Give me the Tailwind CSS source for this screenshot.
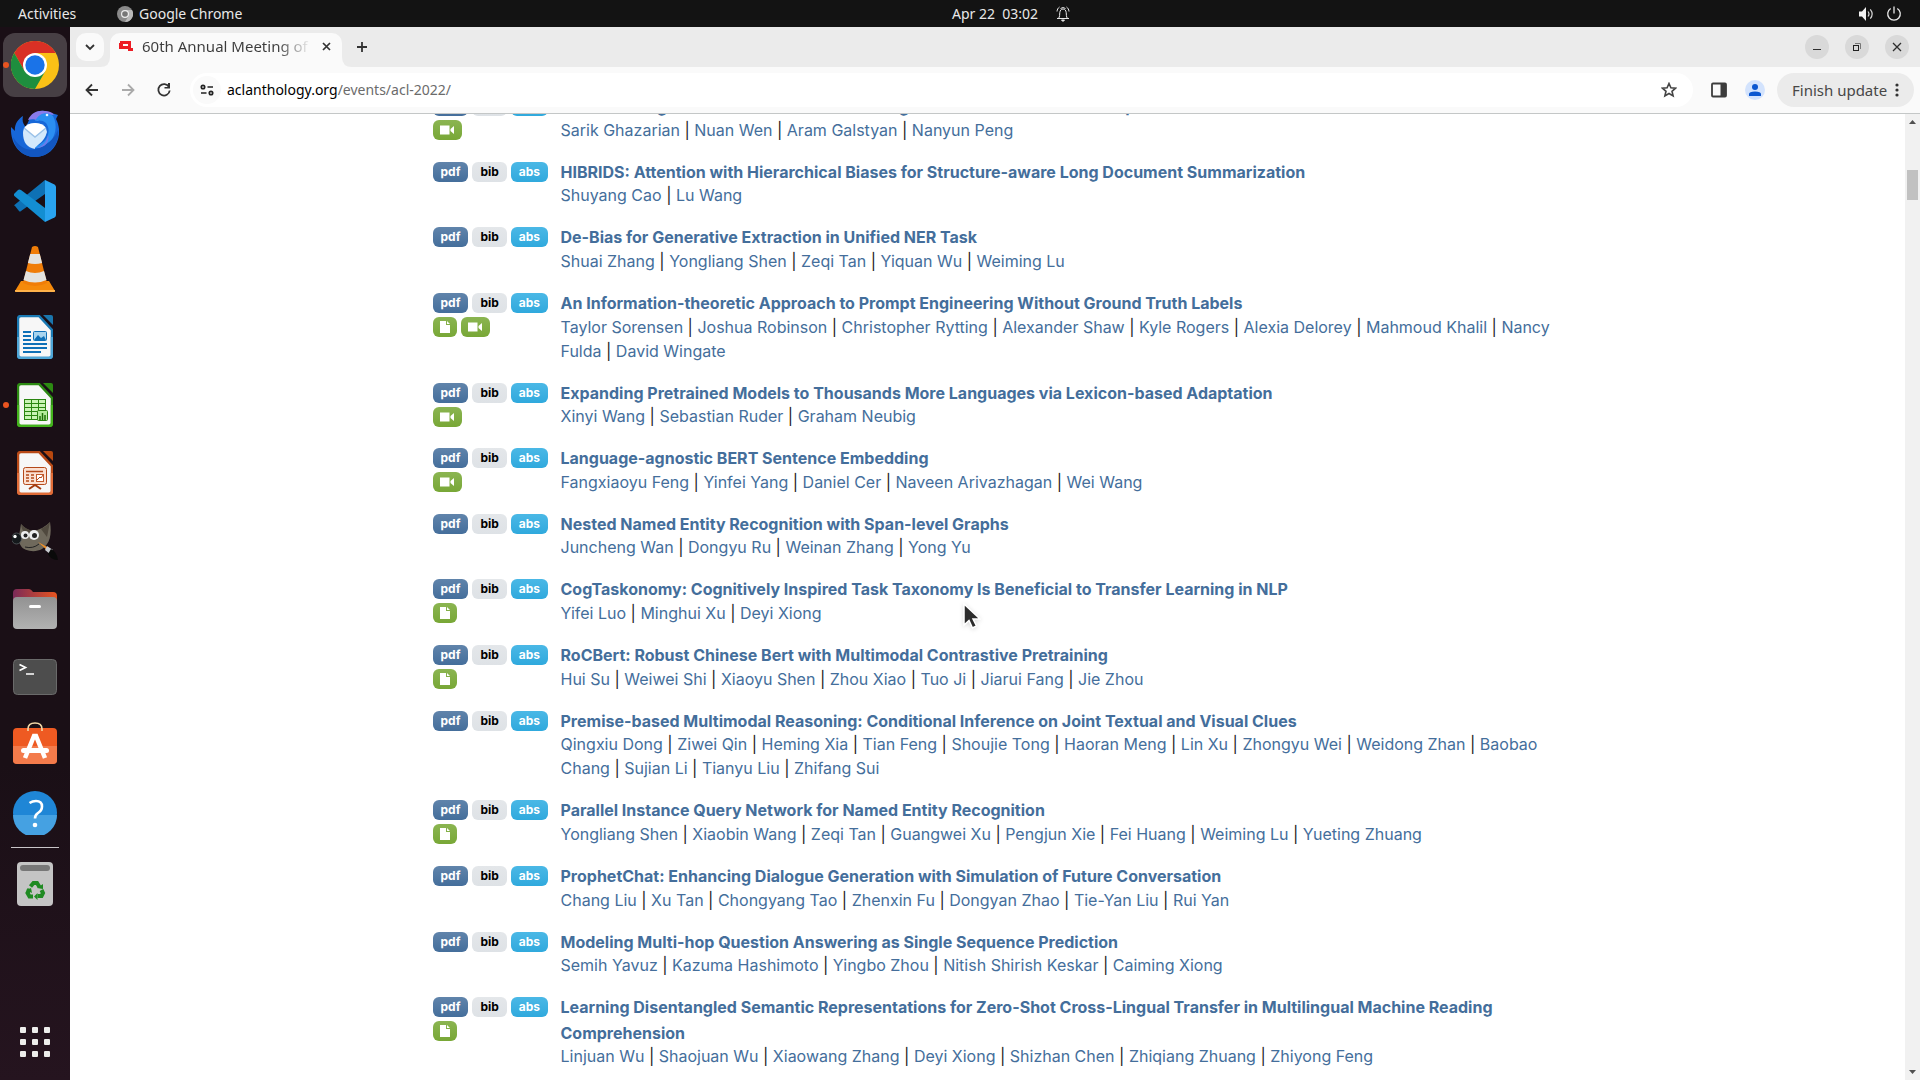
<!DOCTYPE html>
<html lang="en">
<head>
<meta charset="utf-8">
<title>60th Annual Meeting of the Association for Computational Linguistics</title>
<script src="https://cdn.jsdelivr.net/npm/@tailwindcss/browser@4"></script>
</head>
<body class="flex h-screen flex-col overflow-hidden bg-[#1b0f17] font-['Noto_Sans',sans-serif] text-[14px] leading-5">

<!-- desktop top bar -->
<header class="grid h-[27px] shrink-0 grid-cols-[1fr_auto_1fr] items-center bg-[#131313] text-[#e8e8e8]">
  <div class="flex items-center pl-[18px]">
    <button class="w-[63px] text-left">Activities</button>
    <button class="ml-9 flex items-center gap-[6px]">
      <svg class="size-4" viewBox="0 0 16 16"><circle cx="8" cy="8" r="8" fill="#8a8a8a"/><path d="M8 4h7a8 8 0 0 1-7 12l3.500-6z" fill="#b9b9b9"/><circle cx="8" cy="8" r="4" fill="#eee"/><circle cx="8" cy="8" r="2.800" fill="#777"/></svg>
      Google Chrome
    </button>
  </div>
  <div class="flex items-center gap-[18px] pl-[102px]">
    <span class="whitespace-pre">Apr 22  03:02</span>
    <svg class="h-4 w-[14px]" viewBox="0 0 14 16" fill="none" stroke="#e8e8e8"><path d="M1 12.500h12M2.500 12.500c1.500-2 1-4 1.300-6C4.100 4.500 5 3 7 3s2.900 1.500 3.200 3.500c.3 2-.2 4 1.300 6M1 5.500C1.200 3.500 2 2 3.500 1M13 5.500C12.800 3.500 12 2 10.500 1M4.500 2.500Q7 .5 9.500 2.500"/><path d="M5.500 14h3l-1.500 1.500z" fill="#e8e8e8"/></svg>
  </div>
  <div class="flex items-center justify-end gap-3 pr-[18px]">
    <svg class="h-4 w-4" viewBox="0 0 16 16"><path d="M1 5.500h3L8 1v14l-4-4.500H1z" fill="#f2f2f2"/><path d="M10 5.500q2 2.500 0 5M12.300 3.300q3.700 4.700 0 9.400" fill="none" stroke="#d8d8d8" stroke-width="1.200"/></svg>
    <svg class="h-4 w-4" viewBox="0 0 16 16" fill="none" stroke="#e8e8e8" stroke-width="1.300"><path d="M8 .5v7M4.700 2.500a6.300 6.300 0 1 0 6.600 0"/></svg>
  </div>
</header>

<div class="flex min-h-0 flex-1">
  <!-- dock -->
  <nav aria-label="Dock" class="flex w-[70px] shrink-0 flex-col items-center bg-linear-to-b from-[#1a0f16] from-70% to-[#25141f] pt-1">
    <button aria-label="Google Chrome" class="relative grid h-[68px] w-full place-items-center">
      <span class="grid size-16 place-items-center rounded-xl bg-white/20">
        <svg class="size-12" viewBox="0 0 48 48"><circle cx="24" cy="24" r="24" fill="#fbc116"/><path d="M3.200 12A24 24 0 0 1 44.800 12H24L13.600 30z" fill="#d93025"/><path d="M3.200 12A24 24 0 0 0 24 48L34.400 30 24 36 13.600 30z" fill="#1e8e3e"/><circle cx="24" cy="24" r="12" fill="#fff"/><circle cx="24" cy="24" r="9.700" fill="#1a73e8"/></svg>
      </span>
      <span class="absolute left-[3px] top-[31px] size-[6px] rounded-full bg-[#e95420]"></span>
    </button>
    <button aria-label="Thunderbird" class="grid h-[68px] w-full place-items-center">
      <svg class="size-12" viewBox="0 0 48 48"><path d="M0 18l4 4C3 16 7 10 12 7c-1 5 0 8 3 11l3-7C22 4 28 1 34 2l13 4-2 4c4 8 4 16 1 23-4 10-13 15-22 15C9 48-1 35 0 18z" fill="#1767d8"/><path d="M17 11C20 4 27 1 33 2c5 0 8 1 10 4-8-1-13 1-16 6-3-2-6-2-10-1z" fill="#8a7bea"/><path d="M24 12C28 4 36 2 42 7c5 9 3 22-6 29-4 3-9 4-14 2 12-2 20-14 13-24-3-3-7-3-11-2z" fill="#2b8ff2"/><path d="M2 28c7 12 18 16 28 10 8-4 14-9 17-17 2 13-8 27-23 27C12 48 4 40 2 28z" fill="#1256c0"/><path d="M12 24q0-9 12-10 12 1 12 9-2 8-9 13-4 3-3 4-12-2-12-16z" fill="#d4e9fb"/><path d="M13 20q2-6 11-6t11 6L24 28z" fill="#fff"/><path d="M13 19l11 9 11-9" fill="none" stroke="#9bc2e8" stroke-width="1.500"/><path d="M25 39c6-1 11-6 12-13 2 6-2 13-12 13z" fill="#6d7bea"/><circle cx="36" cy="6" r="1.300" fill="#e7f6ff"/></svg>
    </button>
    <button aria-label="Visual Studio Code" class="grid h-[68px] w-full place-items-center">
      <svg class="size-[42px]" viewBox="0 0 42 42"><path d="M1 26l4 5q1 1 2 0L31 14V0L1 24.500Q-.5 25.500 1 26z" fill="#0e71b5"/><path d="M0 14l4-4q1-1 3 0l24 18v14L1 16.500Q-.5 15 0 14z" fill="#138ed2"/><path d="M31 0l9.500 4.500Q42 5.500 42 7v28q0 1.500-1.500 2.500L31 42z" fill="#29a3ef"/></svg>
    </button>
    <button aria-label="VLC" class="grid h-[68px] w-full place-items-center">
      <svg class="h-[46px] w-10" viewBox="0 0 40 46"><path d="M6 35h28l6 10q0 1-1 1H1q-1 0-1-1z" fill="#f58a0b"/><path d="M0 44h40v1q0 1-1 1H1q-1 0-1-1z" fill="#ffb24a"/><path d="M17 1q3-2 6 0l9 36q-12 6-24 0z" fill="#f07d08"/><path d="M15.200 8h9.600l2.300 9q-7 2-14.200 0zM11 25q9 4 18 0l2.500 9q-11.500 5-23 0z" fill="#e3e3e0"/></svg>
    </button>
    <button aria-label="LibreOffice Writer" class="grid h-[68px] w-full place-items-center">
      <svg class="h-11 w-9" viewBox="0 0 36 44"><path d="M4 1h18l13 14v25q0 3-3 3H4q-3 0-3-3V4q0-3 3-3z" fill="#f7f7f7" stroke="#1a7ab4" stroke-width="2.500"/><path d="M1 22v18q0 3 3 3h28q3 0 3-3V22" fill="none" stroke="#4ea5d6" stroke-width="2.500"/><path d="M26 0h8q2 0 2 2v8z" fill="#1a76ad"/><path d="M6 17h8M6 21h8M6 25h8M6 29h24M6 33h24M6 37h18" stroke="#0f70b7" stroke-width="2"/><rect x="16.500" y="16.500" width="13" height="9" rx="1" fill="#a8d4ee" stroke="#0f70b7"/><path d="M17 25l4-5 3 3 3-2 2 4z" fill="#0f70b7"/></svg>
    </button>
    <button aria-label="LibreOffice Calc" class="relative grid h-[68px] w-full place-items-center">
      <span class="absolute left-[3px] top-[31px] size-[6px] rounded-full bg-[#e95420]"></span>
      <svg class="h-11 w-9" viewBox="0 0 36 44"><path d="M4 1h18l13 14v25q0 3-3 3H4q-3 0-3-3V4q0-3 3-3z" fill="#f7f7f7" stroke="#2c8a12" stroke-width="2.500"/><path d="M1 22v18q0 3 3 3h28q3 0 3-3V22" fill="none" stroke="#43b31c" stroke-width="2.500"/><path d="M26 0h8q2 0 2 2v8z" fill="#2c8a12"/><rect x="7.500" y="16.500" width="21" height="20" fill="#c8f3b4" stroke="#2a8510"/><path d="M8 20.500h20M8 24.500h20M8 28.500h20M8 32.500h20M14.500 17v19M21.500 17v19" stroke="#2a8510"/><rect x="20.500" y="27.500" width="10" height="10" rx="1" fill="#b4eb9b" stroke="#2a8510"/><path d="M23 37v-4M25.500 37v-7M28 37v-5" stroke="#1e7008" stroke-width="1.500"/></svg>
    </button>
    <button aria-label="LibreOffice Impress" class="grid h-[68px] w-full place-items-center">
      <svg class="h-11 w-9" viewBox="0 0 36 44"><path d="M4 1h18l13 14v25q0 3-3 3H4q-3 0-3-3V4q0-3 3-3z" fill="#f7f7f7" stroke="#b94a17" stroke-width="2.500"/><path d="M1 22v18q0 3 3 3h28q3 0 3-3V22" fill="none" stroke="#e06c38" stroke-width="2.500"/><path d="M26 0h8q2 0 2 2v8z" fill="#b8480f"/><rect x="6.500" y="16.500" width="23" height="17" rx="2" fill="#fbe0d2" stroke="#b4491a"/><path d="M9 20.500h17M14 24h3M14 27h3M14 30h3M9 24h3M9 27h3M9 30h3" stroke="#b4491a" stroke-width="1.500"/><rect x="19.500" y="23.500" width="7" height="7" fill="#fff" stroke="#c45a2a"/><path d="M20 29l3-3 1 1 2-3" fill="none" stroke="#b4491a"/><path d="M12 38l6-4 6 4" fill="none" stroke="#a43c10" stroke-width="2"/></svg>
    </button>
    <button aria-label="GIMP" class="grid h-[68px] w-full place-items-center">
      <svg class="h-10 w-[46px]" viewBox="0 0 46 40"><path d="M9 3q5 6 12 7c7-1 13-5 17-9 2 12 0 22-8 27-7 4-18 2-21-3-2-3-3-6-2-10z" fill="#6f695c"/><path d="M9 3q1 8 6 12l6-5q-8-2-12-7zM38 1q-4 5-9 7l6 8z" fill="#50493e"/><ellipse cx="4.500" cy="17.500" rx="5" ry="5.500" fill="#15191c" stroke="#5d6468" stroke-width=".7"/><circle cx="3" cy="15.500" r="1.700" fill="#fff"/><circle cx="13" cy="14" r="4" fill="#eee"/><circle cx="22" cy="14" r="5" fill="#eee"/><circle cx="13.500" cy="14.500" r="2" fill="#222"/><circle cx="22.500" cy="14.500" r="2.500" fill="#222"/><path d="M13 26q8 2 14-3" stroke="#222" fill="none"/><path d="M26 21l11 6-1 3z" fill="#f0912a"/><path d="M35 25l6 4-3 4-5-4z" fill="#c9ccd1"/><path d="M39 28q6 3 7 11-7 0-10-6z" fill="#0a0a0a"/></svg>
    </button>
    <button aria-label="Files" class="grid h-[68px] w-full place-items-center">
      <svg class="h-10 w-11" viewBox="0 0 44 40"><defs><linearGradient id="folder"><stop offset="0" stop-color="#7a2a58"/><stop offset="1" stop-color="#e85520"/></linearGradient><linearGradient id="front" x2="0" y2="1"><stop offset="0" stop-color="#929292"/><stop offset="1" stop-color="#b2b2b2"/></linearGradient></defs><path d="M0 4q0-4 4-4h12q2 0 4 3h20q4 0 4 4v14H0z" fill="url(#folder)"/><rect y="8" width="44" height="32" rx="4" fill="url(#front)"/><rect x="16" y="16" width="12" height="3" rx="1.500" fill="#fff"/></svg>
    </button>
    <button aria-label="Terminal" class="grid h-[68px] w-full place-items-center">
      <svg class="h-9 w-11" viewBox="0 0 44 36"><rect x=".5" y=".5" width="43" height="35" rx="4" fill="#4d4d4d" stroke="#6a6a6a"/><path d="M6.500 5.500l6 3-6 3M13 15h8" fill="none" stroke="#fff" stroke-width="1.700"/></svg>
    </button>
    <button aria-label="Ubuntu Software" class="grid h-[68px] w-full place-items-center pb-1">
      <svg class="h-[42px] w-11" viewBox="0 0 44 42"><rect y="6" width="44" height="36" rx="4" fill="#ee5a22"/><path d="M0 24h44v14q0 4-4 4H4q-4 0-4-4z" fill="#f37b4b"/><path d="M15 9V7q0-6 7-6t7 6v2" fill="none" stroke="#f4d9a8" stroke-width="1.600"/><path d="M12 36l9-22h2l9 22" fill="none" stroke="#fff" stroke-width="4.500"/><rect x="8" y="26" width="28" height="5" rx="2.500" fill="#fff"/></svg>
    </button>
    <button aria-label="Help" class="grid h-[68px] w-full place-items-center">
      <svg class="size-11" viewBox="0 0 44 44"><circle cx="22" cy="22" r="22" fill="#1f86d6"/><path d="M0 24h44a22 22 0 0 1-44 0z" fill="#45a1e2"/><path d="M16.500 12q3-2 6.500-2 6 0 6 5.500 0 4-4 6.500-3 2-3 5.500" fill="none" stroke="#fff" stroke-width="2.600"/><circle cx="22" cy="34" r="2.300" fill="#fff"/></svg>
    </button>
    <div class="h-px w-12 shrink-0 bg-[#c9c5c8]"></div>
    <button aria-label="Trash" class="grid h-[72px] w-full place-items-center">
      <svg class="h-11 w-9" viewBox="0 0 36 44"><rect width="36" height="44" rx="4" fill="#c4c4c4"/><rect x="3" y="3" width="30" height="6" rx="3" fill="#777"/><g fill="none" stroke="#1f8a22" stroke-width="4"><path d="M13.500 24.500l3-3.500h3.500l2.500 4M24.500 28l1.500 3-1.500 3h-4M16 34.500h-3.500L10.500 31l2-4"/></g><path d="M20 26l6 1 0-5zM20.500 31v7l-3.500-3.500zM9 28l5-2 1 5z" fill="#1f8a22"/></svg>
    </button>
    <button aria-label="Show Applications" class="mb-[23px] mt-auto grid grid-cols-3 gap-[6px]">
      <span class="size-[6px] rounded-[1px] bg-[#eeeeec]"></span><span class="size-[6px] rounded-[1px] bg-[#eeeeec]"></span><span class="size-[6px] rounded-[1px] bg-[#eeeeec]"></span>
      <span class="size-[6px] rounded-[1px] bg-[#eeeeec]"></span><span class="size-[6px] rounded-[1px] bg-[#eeeeec]"></span><span class="size-[6px] rounded-[1px] bg-[#eeeeec]"></span>
      <span class="size-[6px] rounded-[1px] bg-[#eeeeec]"></span><span class="size-[6px] rounded-[1px] bg-[#eeeeec]"></span><span class="size-[6px] rounded-[1px] bg-[#eeeeec]"></span>
    </button>
  </nav>

  <!-- browser window -->
  <div class="flex min-w-0 flex-1 flex-col bg-white">
    <div class="flex h-10 shrink-0 items-end bg-[#ebebeb] pr-[11px] text-[#3c3c3c]">
      <button aria-label="Search tabs" class="mb-[6px] ml-[6px] grid size-7 place-items-center rounded-[10px] bg-[#fafafa]">
        <svg class="size-3" viewBox="0 0 12 12" fill="none" stroke="#333" stroke-width="1.800"><path d="M2 4l4 4 4-4"/></svg>
      </button>
      <svg class="ml-[-4px] size-[10px]" viewBox="0 0 10 10"><path d="M10 0v10H0Q10 10 10 0z" fill="#fafafa"/></svg>
      <div class="flex h-[34px] w-[232px] items-center rounded-t-[10px] bg-[#fafafa] pb-2 pl-[9px] pr-2">
        <svg class="h-[10px] w-[14px]" viewBox="0 0 14 10"><path d="M1 0h11v7h2v3h-5V8H0V2h1zM4 3v2h5V3z" fill="#ed1c24" fill-rule="evenodd"/></svg>
        <span class="ml-[9px] w-[169px] overflow-hidden whitespace-nowrap bg-linear-to-r from-[#3c3c3c] from-80% to-transparent bg-clip-text text-[15px] text-transparent">60th Annual Meeting of the</span>
        <button aria-label="Close tab" class="ml-auto grid size-4 place-items-center"><svg class="size-[9px]" viewBox="0 0 9 9" stroke="#333" stroke-width="1.700"><path d="M1 1l7 7M8 1L1 8"/></svg></button>
      </div>
      <svg class="size-[10px]" viewBox="0 0 10 10"><path d="M0 0v10h10Q0 10 0 0z" fill="#fafafa"/></svg>
      <button aria-label="New tab" class="mb-[14px] ml-1"><svg class="size-3" viewBox="0 0 12 12" stroke="#333" stroke-width="1.800"><path d="M6 1v10M1 6h10"/></svg></button>
      <div class="mb-2 ml-auto flex gap-4">
        <button aria-label="Minimize" class="grid size-6 place-items-center rounded-full bg-[#d9d9d9]"><svg class="size-3" viewBox="0 0 12 12" stroke="#2e2e2e"><path d="M2 8.500h8"/></svg></button>
        <button aria-label="Restore" class="grid size-6 place-items-center rounded-full bg-[#d9d9d9]"><svg class="size-3" viewBox="0 0 12 12" fill="none"><path d="M4 2.500h5.500V8" stroke="#777"/><rect x="2.500" y="4.500" width="5" height="5" stroke="#222"/></svg></button>
        <button aria-label="Close" class="grid size-6 place-items-center rounded-full bg-[#d9d9d9]"><svg class="size-3" viewBox="0 0 12 12" stroke="#2e2e2e" stroke-width="1.300"><path d="M2 2l8 8M10 2l-8 8"/></svg></button>
      </div>
    </div>

    <div class="flex h-[47px] shrink-0 items-center border-b border-[#c4c7c7] bg-[#fafafa] pl-[14px] pr-[6px]">
      <button aria-label="Back" class="grid size-4 place-items-center"><svg class="size-4" viewBox="0 0 16 16" fill="none" stroke="#333" stroke-width="1.800"><path d="M14 8H3M8 2.500L2.500 8 8 13.500"/></svg></button>
      <button aria-label="Forward" disabled class="ml-5 grid size-4 place-items-center"><svg class="size-4" viewBox="0 0 16 16" fill="none" stroke="#aaa" stroke-width="1.800"><path d="M2 8h11M8 2.500L13.500 8 8 13.500"/></svg></button>
      <button aria-label="Reload" class="ml-5 grid size-4 place-items-center"><svg class="size-4" viewBox="0 0 16 16" fill="none" stroke="#333" stroke-width="1.800"><path d="M13 5A5.700 5.700 0 1 0 13.700 8.500"/><path d="M14 1v5.500H8.500V5H12V1z" fill="#333" stroke="none"/></svg></button>
      <div class="ml-[18px] flex h-[34px] min-w-0 flex-1 items-center rounded-full bg-white pl-[3px] pr-4">
        <button aria-label="View site information" class="grid size-7 place-items-center rounded-full bg-[#fafafa]"><svg class="h-3 w-[14px]" viewBox="0 0 14 12" fill="none" stroke="#222" stroke-width="1.700"><circle cx="3" cy="3" r="1.700"/><path d="M7.500 3H13M1 9h5.500"/><circle cx="11" cy="9" r="1.700"/></svg></button>
        <div class="ml-[6px] flex-1 text-[14px] text-[#6b6b6b]"><span class="text-black">aclanthology.org</span>/events/acl-2022/</div>
        <button aria-label="Bookmark this page"><svg class="size-4" viewBox="0 0 16 16" fill="none" stroke="#444" stroke-width="1.600"><path d="M8 1.500l1.900 4.300 4.700.4-3.600 3.100 1.100 4.600L8 11.500l-4.100 2.400L5 9.300 1.400 6.200l4.700-.4z"/></svg></button>
      </div>
      <button aria-label="Side panel" class="ml-[18px]"><svg class="size-4" viewBox="0 0 16 16"><rect x="1" y="1.500" width="14" height="13" rx="1" fill="none" stroke="#3c3c3c" stroke-width="1.800"/><path d="M9.500 1H15v14H9.500z" fill="#3c3c3c"/></svg></button>
      <button aria-label="Profile" class="ml-[18px] grid size-5 place-items-center rounded-full bg-[#d3e3fd]"><svg class="size-3" viewBox="0 0 12 12" fill="#0b57d0"><circle cx="6" cy="3" r="3"/><path d="M0 12v-2q0-2.500 6-2.500t6 2.500v2z"/></svg></button>
      <button class="ml-3 flex h-[34px] w-[137px] items-center justify-between rounded-full bg-[#ebebeb] px-[15px] text-[15px] text-[#474747]">Finish update
        <svg class="h-[14px] w-1" viewBox="0 0 4 14" fill="#333"><circle cx="2" cy="2" r="1.600"/><circle cx="2" cy="7" r="1.600"/><circle cx="2" cy="12" r="1.600"/></svg>
      </button>
    </div>

    <div class="flex min-h-0 flex-1">
      <main class="min-w-0 flex-1 overflow-hidden font-[Inter,sans-serif] text-[16px] leading-6 text-[#222]">
        <div id="papers" class="mx-auto -mt-[22px] max-w-[1140px] px-[15px]"></div>
      </main>
      <div class="flex w-[15px] shrink-0 flex-col items-center bg-[#f1f1f1] py-[6px]">
        <svg class="h-1 w-[7px]" viewBox="0 0 7 4"><path d="M0 4l3.500-4L7 4z" fill="#505050"/></svg>
        <div class="mt-[46px] h-[30px] w-[11px] bg-[#c1c1c1]"></div>
        <svg class="mt-auto h-1 w-[7px]" viewBox="0 0 7 4"><path d="M0 0l3.500 4L7 0z" fill="#505050"/></svg>
      </div>
    </div>
  </div>
</div>

<!-- pointer -->
<svg class="pointer-events-none absolute left-[963px] top-[603px] h-[27px] w-[18px] drop-shadow-sm" viewBox="0 0 18 27"><path d="M1 1v21l5-4.500 3.500 7.500 4-2-3.500-7H17z" fill="#2b2b2b" stroke="#fff" stroke-width="1.500"/></svg>

<script>
const icons = {
  file: '<svg class="h-3 w-[10px]" viewBox="0 0 10 12" fill="#fff"><path d="M0 0h6v4h4v8H0zM7 0l3 3H7z"/></svg>',
  video: '<svg class="h-3 w-[15px]" viewBox="0 0 15 12" fill="#fff"><path d="M0 1.500h9.500v9H0zM10.500 5L14 2v8l-3.500-3z"/></svg>'
};
// title, authors, attachments
const papers = [
  ['DEAM: Dialogue Coherence Evaluation using AMR-based Semantic Manipulations', 'Sarik Ghazarian,Nuan Wen,Aram Galstyan,Nanyun Peng', 'video'],
  ['HIBRIDS: Attention with Hierarchical Biases for Structure-aware Long Document Summarization', 'Shuyang Cao,Lu Wang', ''],
  ['De-Bias for Generative Extraction in Unified NER Task', 'Shuai Zhang,Yongliang Shen,Zeqi Tan,Yiquan Wu,Weiming Lu', ''],
  ['An Information-theoretic Approach to Prompt Engineering Without Ground Truth Labels', 'Taylor Sorensen,Joshua Robinson,Christopher Rytting,Alexander Shaw,Kyle Rogers,Alexia Delorey,Mahmoud Khalil,Nancy Fulda,David Wingate', 'file video'],
  ['Expanding Pretrained Models to Thousands More Languages via Lexicon-based Adaptation', 'Xinyi Wang,Sebastian Ruder,Graham Neubig', 'video'],
  ['Language-agnostic BERT Sentence Embedding', 'Fangxiaoyu Feng,Yinfei Yang,Daniel Cer,Naveen Arivazhagan,Wei Wang', 'video'],
  ['Nested Named Entity Recognition with Span-level Graphs', 'Juncheng Wan,Dongyu Ru,Weinan Zhang,Yong Yu', ''],
  ['CogTaskonomy: Cognitively Inspired Task Taxonomy Is Beneficial to Transfer Learning in NLP', 'Yifei Luo,Minghui Xu,Deyi Xiong', 'file'],
  ['RoCBert: Robust Chinese Bert with Multimodal Contrastive Pretraining', 'Hui Su,Weiwei Shi,Xiaoyu Shen,Zhou Xiao,Tuo Ji,Jiarui Fang,Jie Zhou', 'file'],
  ['Premise-based Multimodal Reasoning: Conditional Inference on Joint Textual and Visual Clues', 'Qingxiu Dong,Ziwei Qin,Heming Xia,Tian Feng,Shoujie Tong,Haoran Meng,Lin Xu,Zhongyu Wei,Weidong Zhan,Baobao Chang,Sujian Li,Tianyu Liu,Zhifang Sui', ''],
  ['Parallel Instance Query Network for Named Entity Recognition', 'Yongliang Shen,Xiaobin Wang,Zeqi Tan,Guangwei Xu,Pengjun Xie,Fei Huang,Weiming Lu,Yueting Zhuang', 'file'],
  ['ProphetChat: Enhancing Dialogue Generation with Simulation of Future Conversation', 'Chang Liu,Xu Tan,Chongyang Tao,Zhenxin Fu,Dongyan Zhao,Tie-Yan Liu,Rui Yan', ''],
  ['Modeling Multi-hop Question Answering as Single Sequence Prediction', 'Semih Yavuz,Kazuma Hashimoto,Yingbo Zhou,Nitish Shirish Keskar,Caiming Xiong', ''],
  ['Learning Disentangled Semantic Representations for Zero-Shot Cross-Lingual Transfer in Multilingual Machine Reading Comprehension', 'Linjuan Wu,Shaojuan Wu,Xiaowang Zhang,Deyi Xiong,Shizhan Chen,Zhiqiang Zhuang,Zhiyong Feng', 'file']
];
document.getElementById('papers').innerHTML = papers.map(([title, authors, extras]) => `
  <article class="mb-4 flex">
    <div class="flex w-32 shrink-0 flex-col gap-1 pt-1 text-[12px] font-bold leading-3">
      <div class="flex gap-1">
        <a href="#" class="rounded-md bg-linear-to-b from-[#6084ab] to-[#446e9b] px-2 py-1 text-white">pdf</a>
        <a href="#" class="rounded-md bg-linear-to-b from-[#e4e7ea] to-[#dee2e6] px-2 py-1 text-black">bib</a>
        <a href="#" class="rounded-md bg-linear-to-b from-[#4ab8e6] to-[#2fa9dd] px-2 py-1 text-white">abs</a>
      </div>
      <div class="flex gap-1">${extras.split(' ').filter(Boolean).map(k =>
        `<a href="#" aria-label="${k}" class="rounded-md bg-linear-to-b from-[#8bb551] to-[#78a736] px-[7px] py-1">${icons[k]}</a>`).join('')}</div>
    </div>
    <div class="-mr-3 min-w-0 flex-1 text-[#446e9b]">
      <h2><a href="#" class="align-middle font-bold">${title}</a></h2>
      <p>${authors.split(',').map(a => `<a href="#">${a}</a>`).join(' <span class="text-[#222]">|</span> ')}</p>
    </div>
  </article>`).join('');
</script>
</body>
</html>
